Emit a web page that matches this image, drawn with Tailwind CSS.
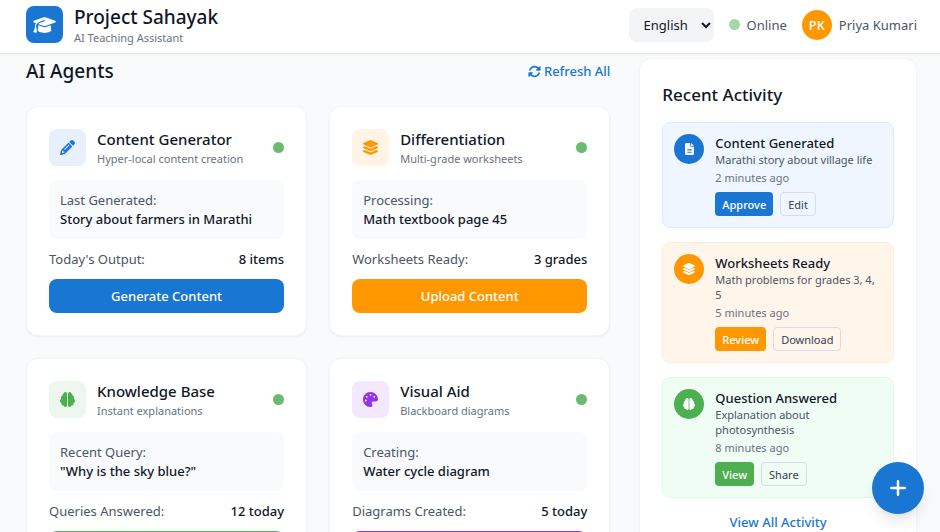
<!DOCTYPE html>
<html lang="en">
<head>
<meta charset="utf-8">
<meta name="viewport" content="width=device-width, initial-scale=1">
<title>Project Sahayak</title>
<script src="https://cdn.jsdelivr.net/npm/@tailwindcss/browser@4"></script>
</head>
<body class="min-h-screen bg-[#f9fafc] font-['Noto_Sans',sans-serif] text-[13px] leading-[18px] text-gray-900">

<svg class="hidden" aria-hidden="true">
  <symbol id="cap" viewBox="0 0 640 512"><path d="M320 32c-8.1 0-16.1 1.4-23.7 4.1L15.8 137.4C6.3 140.9 0 149.9 0 160s6.3 19.1 15.8 22.6l57.9 20.9C57.3 229.3 48 259.8 48 291.9v28.1c0 28.4-10.8 57.7-22.3 80.8c-6.5 13-13.9 25.8-22.5 37.6C0 442.7-.9 448.3 .9 453.4s6 8.9 11.2 10.2l64 16c4.2 1.1 8.7 .3 12.4-2s6.3-6.1 7.1-10.4c8.6-42.8 4.3-81.2-2.1-108.7C90.3 344.3 86 329.8 80 316.5V291.9c0-30.2 10.2-58.7 27.9-81.5c12.9-15.5 29.6-28 49.2-35.7l157-61.7c8.2-3.2 17.5 .8 20.7 9s-.8 17.5-9 20.7l-157 61.7c-12.4 4.9-23.3 12.4-32.2 21.6l159.6 57.6c7.6 2.7 15.6 4.1 23.7 4.1s16.1-1.4 23.7-4.1L624.2 182.6c9.5-3.4 15.8-12.5 15.8-22.6s-6.3-19.1-15.8-22.6L343.7 36.1C336.1 33.4 328.1 32 320 32zM128 408c0 35.3 86 72 192 72s192-36.7 192-72L496.7 262.6 354.5 314c-11.1 4-22.8 6-34.5 6s-23.5-2-34.5-6L143.3 262.6 128 408z"/></symbol>
  <symbol id="layers" viewBox="0 0 576 512"><path d="M264.5 5.2c14.9-6.9 32.1-6.9 47 0l218.6 101c8.5 3.9 13.9 12.4 13.9 21.8s-5.4 17.9-13.9 21.8l-218.6 101c-14.9 6.9-32.1 6.9-47 0L45.9 149.8C37.4 145.8 32 137.3 32 128s5.4-17.9 13.9-21.8L264.5 5.2zM476.9 209.6l53.2 24.6c8.5 3.9 13.9 12.4 13.9 21.8s-5.4 17.9-13.9 21.8l-218.6 101c-14.9 6.9-32.1 6.9-47 0L45.9 277.8C37.4 273.8 32 265.3 32 256s5.4-17.9 13.9-21.8l53.2-24.6 152 70.2c23.4 10.8 50.4 10.8 73.8 0l152-70.2zm-152 198.2l152-70.2 53.2 24.6c8.5 3.9 13.9 12.4 13.9 21.8s-5.4 17.9-13.9 21.8l-218.6 101c-14.9 6.9-32.1 6.9-47 0L45.9 405.8C37.4 401.8 32 393.3 32 384s5.4-17.9 13.9-21.8l53.2-24.6 152 70.2c23.4 10.8 50.4 10.8 73.8 0z"/></symbol>
  <symbol id="pencil" viewBox="0 0 512 512"><path d="M410.3 231l11.3-11.3-33.9-33.9-62.1-62.1L291.7 89.8l-11.3 11.3-22.6 22.6L58.6 322.9c-10.4 10.4-18 23.3-22.2 37.4L1 480.7c-2.5 8.4-.2 17.5 6.1 23.7s15.3 8.5 23.7 6.1l120.3-35.4c14.1-4.2 27-11.8 37.4-22.2L387.7 253.7 410.3 231zM160 399.4l-9.1 22.7c-4 3.1-8.5 5.4-13.3 6.9L59.4 452l23-78.1c1.4-4.9 3.8-9.4 6.9-13.3l22.7-9.1v32c0 8.8 7.2 16 16 16h32zM362.7 18.7L348.3 33.2 325.7 55.8 314.3 67.1l33.9 33.9 62.1 62.1 33.9 33.9 11.3-11.3 22.6-22.6 14.5-14.5c25-25 25-65.5 0-90.5L453.3 18.7c-25-25-65.5-25-90.5 0zm-47.4 168l-144 144c-6.2 6.2-16.4 6.2-22.6 0s-6.2-16.4 0-22.6l144-144c6.2-6.2 16.4-6.2 22.6 0s6.2 16.4 0 22.6z"/></symbol>
  <symbol id="brain" viewBox="0 0 512 512"><path d="M184 0c30.9 0 56 25.1 56 56V456c0 30.9-25.1 56-56 56c-28.9 0-52.7-21.9-55.7-50.1c-5.2 1.4-10.7 2.1-16.3 2.1c-35.3 0-64-28.7-64-64c0-7.4 1.3-14.6 3.6-21.2C21.4 367.4 0 338.2 0 304c0-31.9 18.7-59.5 45.8-72.3C37.1 220.8 32 207 32 192c0-30.7 21.6-56.3 50.4-62.6C80.8 123.9 80 118 80 112c0-29.9 20.6-55.1 48.3-62.1C131.3 21.9 155.1 0 184 0zM328 0c28.9 0 52.6 21.9 55.7 49.9c27.8 7 48.3 32.1 48.3 62.1c0 6-.8 11.9-2.4 17.4c28.8 6.2 50.4 31.9 50.4 62.6c0 15-5.1 28.8-13.8 39.7C493.3 244.5 512 272.1 512 304c0 34.2-21.4 63.4-51.6 74.8c2.3 6.6 3.6 13.8 3.6 21.2c0 35.3-28.7 64-64 64c-5.6 0-11.1-.7-16.3-2.1c-3 28.2-26.8 50.1-55.7 50.1c-30.9 0-56-25.1-56-56V56c0-30.9 25.1-56 56-56z"/></symbol>
  <symbol id="palette" viewBox="0 0 512 512"><path d="M512 256c0 .9 0 1.8 0 2.7c-.4 36.5-33.6 61.3-70.1 61.3H344c-26.5 0-48 21.5-48 48c0 3.4 .4 6.7 1 9.9c2.1 10.2 6.5 20 10.8 29.9c6.1 13.8 12.1 27.5 12.1 42c0 31.8-21.6 60.7-53.4 62c-3.5 .1-7 .2-10.6 .2C114.6 512 0 397.4 0 256S114.6 0 256 0S512 114.6 512 256zM128 288a32 32 0 1 0 -64 0 32 32 0 1 0 64 0zm0-96a32 32 0 1 0 0-64 32 32 0 1 0 0 64zM288 96a32 32 0 1 0 -64 0 32 32 0 1 0 64 0zm96 96a32 32 0 1 0 0-64 32 32 0 1 0 0 64z"/></symbol>
  <symbol id="file" viewBox="0 0 384 512"><path d="M64 0C28.7 0 0 28.7 0 64V448c0 35.3 28.7 64 64 64H320c35.3 0 64-28.7 64-64V160H256c-17.7 0-32-14.3-32-32V0H64zM256 0V128H384L256 0zM112 256H272c8.8 0 16 7.2 16 16s-7.2 16-16 16H112c-8.8 0-16-7.2-16-16s7.2-16 16-16zm0 64H272c8.8 0 16 7.2 16 16s-7.2 16-16 16H112c-8.8 0-16-7.2-16-16s7.2-16 16-16zm0 64H272c8.8 0 16 7.2 16 16s-7.2 16-16 16H112c-8.8 0-16-7.2-16-16s7.2-16 16-16z"/></symbol>
  <symbol id="sync" viewBox="0 0 512 512"><path d="M142.9 142.9c62.2-62.2 162.7-62.5 225.3-1L327 183c-6.9 6.9-8.9 17.2-5.2 26.2s12.5 14.8 22.2 14.8H463.5c0 0 0 0 0 0H472c13.3 0 24-10.7 24-24V72c0-9.7-5.8-18.5-14.8-22.2s-19.3-1.7-26.2 5.2L413.4 96.6c-87.6-86.5-228.7-86.2-315.8 1C73.2 122 55.6 150.7 44.8 181.4c-5.9 16.7 2.9 34.9 19.5 40.8s34.9-2.9 40.8-19.5c7.7-21.8 20.2-42.3 37.8-59.8zM16 312v7.6 .7V440c0 9.7 5.8 18.5 14.8 22.2s19.3 1.7 26.2-5.2l41.6-41.6c87.6 86.5 228.7 86.2 315.8-1c24.4-24.4 42.1-53.1 52.9-83.7c5.9-16.7-2.9-34.9-19.5-40.8s-34.9 2.9-40.8 19.5c-7.7 21.8-20.2 42.3-37.8 59.8c-62.2 62.2-162.7 62.5-225.3 1L185 329c6.9-6.9 8.9-17.2 5.2-26.2s-12.5-14.8-22.2-14.8H48.4h-.7H40c-13.3 0-24 10.7-24 24z"/></symbol>
</svg>

<header class="sticky top-0 z-10 flex items-center justify-between border-b border-gray-200 bg-white pt-1 pr-[23px] pb-2 pl-[26px] shadow-xs">
  <div class="flex items-center gap-[11px]">
    <div class="flex size-[37px] items-center justify-center rounded-lg bg-[#1976d2] text-white"><svg class="h-[18px] w-[23px] fill-current"><use href="#cap"/></svg></div>
    <div>
      <h1 class="text-[19px] leading-[26px] font-medium">Project Sahayak</h1>
      <p class="text-[11px] leading-[15px] text-gray-500">AI Teaching Assistant</p>
    </div>
  </div>
  <div class="flex items-center gap-[15px]">
    <select aria-label="Language" class="h-[34px] w-[85px] rounded-lg bg-gray-100 pl-[11px] text-[13px]"><option>English</option><option>Hindi</option><option>Marathi</option></select>
    <div class="flex items-center gap-[7px] text-gray-600"><span class="size-[11px] rounded-full bg-[#a5d7a7]"></span>Online</div>
    <div class="flex items-center gap-[7px] text-gray-600">
      <span class="flex size-[30px] items-center justify-center rounded-full bg-[#ff9800] font-medium text-white">PK</span>Priya Kumari
    </div>
  </div>
</header>

<main class="grid grid-cols-3 items-start gap-[29px] pt-1 pr-[23px] pb-[22px] pl-[26px]">
  <section class="col-span-2">
    <div class="mb-[22px] flex items-center justify-between">
      <h2 class="text-[19px] leading-[26px] font-medium">AI Agents</h2>
      <button class="flex items-center gap-[3px] font-medium text-[#1976d2]"><svg class="size-[13px] fill-current"><use href="#sync"/></svg>Refresh All</button>
    </div>
    <div class="grid grid-cols-2 gap-[22px]">

      <article class="rounded-xl border border-gray-100 bg-white p-[22px] shadow-xs">
        <div class="mb-[14px] flex items-center gap-[11px]">
          <div class="flex size-[37px] items-center justify-center rounded-lg bg-[#e8f1fb] text-[#1976d2]"><svg class="size-[15px] fill-current"><use href="#pencil"/></svg></div>
          <div class="flex grow flex-col gap-[2px]">
            <h3 class="text-[15px] leading-[20px] font-medium">Content Generator</h3>
            <p class="text-[11px] leading-[15px] text-gray-500">Hyper-local content creation</p>
          </div>
          <span class="size-[11px] rounded-full bg-[#6abb6d]"></span>
        </div>
        <div class="mb-[11px] flex flex-col gap-px rounded-lg bg-[#f9fafc] p-[11px]">
          <p class="text-gray-600">Last Generated:</p>
          <p class="font-medium">Story about farmers in Marathi</p>
        </div>
        <div class="mb-[11px] flex justify-between"><span class="text-gray-600">Today's Output:</span><span class="font-medium">8 items</span></div>
        <button class="h-[34px] w-full rounded-lg bg-[#1976d2] font-medium text-white">Generate Content</button>
      </article>

      <article class="rounded-xl border border-gray-100 bg-white p-[22px] shadow-xs">
        <div class="mb-[14px] flex items-center gap-[11px]">
          <div class="flex size-[37px] items-center justify-center rounded-lg bg-[#fff4e5] text-[#ff9800]"><svg class="h-[15px] w-[17px] fill-current"><use href="#layers"/></svg></div>
          <div class="flex grow flex-col gap-[2px]">
            <h3 class="text-[15px] leading-[20px] font-medium">Differentiation</h3>
            <p class="text-[11px] leading-[15px] text-gray-500">Multi-grade worksheets</p>
          </div>
          <span class="size-[11px] rounded-full bg-[#6abb6d]"></span>
        </div>
        <div class="mb-[11px] flex flex-col gap-px rounded-lg bg-[#f9fafc] p-[11px]">
          <p class="text-gray-600">Processing:</p>
          <p class="font-medium">Math textbook page 45</p>
        </div>
        <div class="mb-[11px] flex justify-between"><span class="text-gray-600">Worksheets Ready:</span><span class="font-medium">3 grades</span></div>
        <button class="h-[34px] w-full rounded-lg bg-[#ff9800] font-medium text-white">Upload Content</button>
      </article>

      <article class="rounded-xl border border-gray-100 bg-white p-[22px] shadow-xs">
        <div class="mb-[14px] flex items-center gap-[11px]">
          <div class="flex size-[37px] items-center justify-center rounded-lg bg-[#edf7ed] text-[#4caf50]"><svg class="size-[15px] fill-current"><use href="#brain"/></svg></div>
          <div class="flex grow flex-col gap-[2px]">
            <h3 class="text-[15px] leading-[20px] font-medium">Knowledge Base</h3>
            <p class="text-[11px] leading-[15px] text-gray-500">Instant explanations</p>
          </div>
          <span class="size-[11px] rounded-full bg-[#6abb6d]"></span>
        </div>
        <div class="mb-[11px] flex flex-col gap-px rounded-lg bg-[#f9fafc] p-[11px]">
          <p class="text-gray-600">Recent Query:</p>
          <p class="font-medium">"Why is the sky blue?"</p>
        </div>
        <div class="mb-[11px] flex justify-between"><span class="text-gray-600">Queries Answered:</span><span class="font-medium">12 today</span></div>
        <button aria-label="Ask a question" class="h-[34px] w-full rounded-lg bg-[#4caf50]"></button>
      </article>

      <article class="rounded-xl border border-gray-100 bg-white p-[22px] shadow-xs">
        <div class="mb-[14px] flex items-center gap-[11px]">
          <div class="flex size-[37px] items-center justify-center rounded-lg bg-[#f3e8ff] text-[#9333ea]"><svg class="size-[15px] fill-current"><use href="#palette"/></svg></div>
          <div class="flex grow flex-col gap-[2px]">
            <h3 class="text-[15px] leading-[20px] font-medium">Visual Aid</h3>
            <p class="text-[11px] leading-[15px] text-gray-500">Blackboard diagrams</p>
          </div>
          <span class="size-[11px] rounded-full bg-[#6abb6d]"></span>
        </div>
        <div class="mb-[11px] flex flex-col gap-px rounded-lg bg-[#f9fafc] p-[11px]">
          <p class="text-gray-600">Creating:</p>
          <p class="font-medium">Water cycle diagram</p>
        </div>
        <div class="mb-[11px] flex justify-between"><span class="text-gray-600">Diagrams Created:</span><span class="font-medium">5 today</span></div>
        <button aria-label="Create a diagram" class="h-[34px] w-full rounded-lg bg-[#9333ea]"></button>
      </article>
    </div>
  </section>

  <aside class="rounded-xl border border-gray-100 bg-white p-[22px] shadow-xs">
    <h2 class="mb-[14px] text-[17px] leading-[27px] font-medium">Recent Activity</h2>
    <ul class="flex flex-col gap-[14px] text-[11px] leading-[15px]">
      <li class="flex items-start gap-[11px] rounded-lg border border-[#dbeafe] bg-[#eff6ff] p-[11px]">
        <span class="flex size-[30px] shrink-0 items-center justify-center rounded-full bg-[#1976d2] text-white"><svg class="h-3 w-[9px] fill-current"><use href="#file"/></svg></span>
        <div class="min-w-0 grow">
          <h3 class="text-[13px] leading-[18px] font-medium">Content Generated</h3>
          <p class="text-gray-600">Marathi story about village life</p>
          <p class="mt-[3px] text-gray-500">2 minutes ago</p>
          <div class="mt-[7px] flex gap-[7px]">
            <button class="h-6 rounded bg-[#1976d2] px-[7px] font-medium text-white">Approve</button>
            <button class="h-6 rounded border border-[#d8dce4] px-[7px] text-gray-700">Edit</button>
          </div>
        </div>
      </li>
      <li class="flex items-start gap-[11px] rounded-lg border border-[#ffedd5] bg-[#fff5eb] p-[11px]">
        <span class="flex size-[30px] shrink-0 items-center justify-center rounded-full bg-[#ff9800] text-white"><svg class="h-3 w-[14px] fill-current"><use href="#layers"/></svg></span>
        <div class="min-w-0 grow">
          <h3 class="text-[13px] leading-[18px] font-medium">Worksheets Ready</h3>
          <p class="text-gray-600">Math problems for grades 3, 4, 5</p>
          <p class="mt-[3px] text-gray-500">5 minutes ago</p>
          <div class="mt-[7px] flex gap-[7px]">
            <button class="h-6 rounded bg-[#ff9800] px-[7px] font-medium text-white">Review</button>
            <button class="h-6 rounded border border-[#d8dce4] px-[7px] text-gray-700">Download</button>
          </div>
        </div>
      </li>
      <li class="flex items-start gap-[11px] rounded-lg border border-[#dcfce7] bg-[#f0fdf4] p-[11px]">
        <span class="flex size-[30px] shrink-0 items-center justify-center rounded-full bg-[#4caf50] text-white"><svg class="size-3 fill-current"><use href="#brain"/></svg></span>
        <div class="min-w-0 grow">
          <h3 class="text-[13px] leading-[18px] font-medium">Question Answered</h3>
          <p class="text-gray-600">Explanation about photosynthesis</p>
          <p class="mt-[3px] text-gray-500">8 minutes ago</p>
          <div class="mt-[7px] flex gap-[7px]">
            <button class="h-6 rounded bg-[#4caf50] px-[7px] font-medium text-white">View</button>
            <button class="h-6 rounded border border-[#d8dce4] px-[7px] text-gray-700">Share</button>
          </div>
        </div>
      </li>
    </ul>
    <a href="#activity" class="mt-[15px] block text-center font-medium text-[#1976d2]">View All Activity</a>
  </aside>
</main>

<button aria-label="Add" class="fixed right-4 bottom-[18px] z-20 flex size-[52px] items-center justify-center rounded-full bg-[#1976d2] text-white shadow-lg">
  <svg class="size-[18px] fill-none stroke-current stroke-[2.5]" viewBox="0 0 18 18" stroke-linecap="round"><path d="M9 2.25v13.5M2.25 9h13.5"/></svg>
</button>
</body>
</html>
